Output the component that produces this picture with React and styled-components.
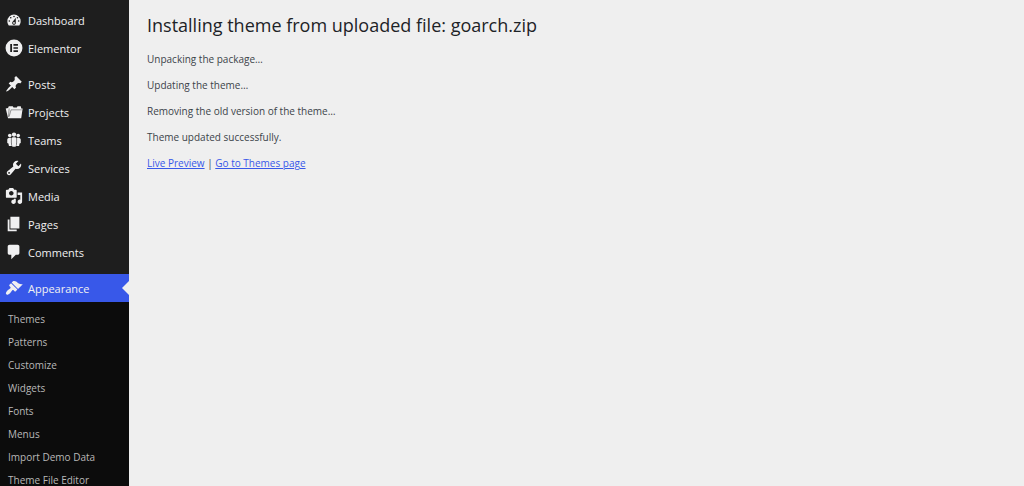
import React from 'react';
import styled, { createGlobalStyle } from 'styled-components';

const GlobalStyle = createGlobalStyle`
  * {
    box-sizing: border-box;
  }

  body {
    margin: 0;
    background-color: #efefef;
    color: #3c434a;
    font-family: 'Segoe UI', 'Open Sans', 'Noto Sans', sans-serif;
    font-size: 10px;
  }
`;

const Layout = styled.div`
  display: flex;
  height: 100vh;
  overflow: hidden;
`;

const Sidebar = styled.nav`
  flex: none;
  width: 129px;
  padding-top: 6px;
  background-color: #1e1e1e;
`;

const MenuList = styled.ul`
  margin: 0 0 8px;
  padding: 0;
  list-style: none;
`;

const MenuLink = styled.a`
  position: relative;
  display: flex;
  align-items: center;
  gap: 5px;
  height: 28px;
  padding-left: 5px;
  background-color: ${({ $active }) => ($active ? '#3858e9' : 'transparent')};
  color: #f0f0f1;
  font-size: 11px;
  font-weight: 500;
  text-decoration: none;
  white-space: nowrap;

  &::after {
    content: '';
    display: ${({ $active }) => ($active ? 'block' : 'none')};
    position: absolute;
    top: 7px;
    right: 0;
    border: solid transparent;
    border-width: 7px 7px 7px 0;
    border-right-color: #efefef;
  }
`;

const Icon = styled.svg`
  flex: none;
  width: 18px;
  height: 18px;
  fill: currentColor;
`;

const SubMenu = styled.ul`
  height: 100vh;
  margin: 0;
  padding: 6px 0;
  background-color: #0c0c0c;
  list-style: none;
`;

const SubLink = styled.a`
  display: block;
  padding-left: 8px;
  color: #b8b8b8;
  font-size: 10px;
  line-height: 23px;
  text-decoration: none;
  white-space: nowrap;
`;

const Content = styled.main`
  flex: 1;
  min-width: 0;
  padding: 12px 18px;
`;

const Title = styled.h1`
  margin: 0 0 8px;
  color: #1d2327;
  font-size: 18px;
  font-weight: 400;
  line-height: 26px;
`;

const Message = styled.p`
  margin: 0;
  line-height: 26px;
`;

const ActionLink = styled.a`
  color: #3858e9;
  text-decoration: underline;
`;

const icons = {
  dashboard: (
    <path
      fillRule="evenodd"
      d="M4.2 16h11.6c1-1.3 1.6-2.9 1.6-4.7a7.4 7.4 0 1 0-14.8 0c0 1.8.6 3.4 1.6 4.7zM10 5.2a.9.9 0 1 1 0 1.8.9.9 0 0 1 0-1.8zM6.4 6.6a.9.9 0 1 1 0 1.8.9.9 0 0 1 0-1.8zM13.8 6.6a.9.9 0 1 1 0 1.8.9.9 0 0 1 0-1.8zM8.7 11.7L12 7.6v5.6c0 1.1-.9 2-2 2s-2-.9-2-2c0-.6.3-1.1.7-1.5zM4.8 10.2a.9.9 0 1 1 0 1.8.9.9 0 0 1 0-1.8zM15.2 10.2a.9.9 0 1 1 0 1.8.9.9 0 0 1 0-1.8zM11 13.2a1 1 0 1 0-2 0 1 1 0 0 0 2 0z"
    />
  ),
  elementor: (
    <path
      fillRule="evenodd"
      d="M10 .6a9.4 9.4 0 1 0 0 18.8A9.4 9.4 0 0 0 10 .6zM5.8 5.6h2v8.8h-2zM9.4 5.6h5v1.8h-5zM9.4 9.1h5v1.8h-5zM9.4 12.6h5v1.8h-5z"
    />
  ),
  posts: (
    <path d="M10.44 3.02l1.82-1.82 6.36 6.35-1.83 1.82c-1.05-.68-2.48-.57-3.41.36l-.75.75c-.92.93-1.04 2.35-.35 3.41l-1.83 1.82-2.41-2.41-2.8 2.79c-.42.42-3.38 2.71-3.8 2.29s1.86-3.39 2.28-3.81l2.79-2.79L4.1 9.36l1.83-1.82c1.05.69 2.48.57 3.4-.36l.75-.75c.93-.92 1.05-2.35.36-3.41z" />
  ),
  projects: (
    <>
      <path d="M.8 6l2.6-.5.8-2h4.4l.9 1.4h3.6l.8-1.3h3.6l.6 2.4h1.5L18 17H3.4z" />
      <path
        d="M3.9 15.4L4.6 6M4.6 15.2l2.1-7.6h12"
        fill="none"
        stroke="#1e1e1e"
        strokeWidth="0.8"
        opacity="0.6"
      />
    </>
  ),
  teams: (
    <>
      <circle cx="10" cy="4" r="2.4" />
      <circle cx="5.3" cy="5" r="2" />
      <circle cx="14.7" cy="5" r="2" />
      <path d="M7.2 8.4C7.2 7.5 8.4 7 10 7s2.8.5 2.8 1.4v5L11.8 17.5H8.2L7.2 13.4z" />
      <path d="M6.6 7.6C4.4 7 2.5 8 2.5 9.6v3.6l1.3.8.6 2.6h3.2L6.6 13.4z" />
      <path d="M13.4 7.6c2.2-.6 4.1.4 4.1 2v3.6l-1.3.8-.6 2.6h-3.2l1-3.2z" />
    </>
  ),
  services: (
    <path d="M16.68 9.77c-1.34 1.34-3.3 1.67-4.95.99l-5.41 6.52c-.99.99-2.59.99-3.58 0s-.99-2.59 0-3.57l6.52-5.42c-.68-1.65-.35-3.61.99-4.95 1.28-1.28 3.12-1.62 4.72-1.06l-2.89 2.89 2.82 2.82 2.86-2.87c.53 1.58.18 3.39-1.08 4.65zM3.81 16.21c.4.39 1.04.39 1.43 0 .4-.4.4-1.04 0-1.43-.39-.4-1.03-.4-1.43 0-.39.39-.39 1.03 0 1.43z" />
  ),
  media: (
    <path
      fillRule="evenodd"
      d="M13 11V4c0-.55-.45-1-1-1h-1.67L9 1H5L3.67 3H2c-.55 0-1 .45-1 1v7c0 .55.45 1 1 1h10c.55 0 1-.45 1-1zM7 4.5c1.38 0 2.5 1.12 2.5 2.5S8.38 9.5 7 9.5 4.5 8.38 4.5 7 5.62 4.5 7 4.5zM14 6h5v10.5c0 1.38-1.12 2.5-2.5 2.5S14 17.88 14 16.5s1.12-2.5 2.5-2.5c.17 0 .34.02.5.05V9h-3V6zm-4 8.05V13h2v3.5c0 1.38-1.12 2.5-2.5 2.5S7 17.88 7 16.5 8.12 14 9.5 14c.17 0 .34.02.5.05z"
    />
  ),
  pages: <path d="M6 15V2h10v13H6zm-1 1h8v2H3V5h2v11z" />,
  comments: (
    <path d="M5 2h9c1.1 0 2 .9 2 2v7c0 1.1-.9 2-2 2h-2l-5 5v-5H5c-1.1 0-2-.9-2-2V4c0-1.1.9-2 2-2z" />
  ),
  appearance: (
    <path d="M14.48 11.06L7.41 3.99l1.5-1.5c.5-.56 2.3-.47 3.51.32 1.21.8 1.43 1.28 2.91 2.1 1.18.64 2.45 1.26 4.45.85zm-.71.71L6.7 4.7 4.93 6.47c-.39.39-.39 1.02 0 1.41l1.06 1.06c.39.39.39 1.03 0 1.42-.6.6-1.43 1.11-2.21 1.69-.35.26-.7.53-1.01.84C1.43 14.23.4 16.08 1.4 17.07c.99 1 2.84-.03 4.18-1.36.31-.31.58-.66.85-1.02.57-.78 1.08-1.61 1.69-2.21.39-.39 1.02-.39 1.41 0l1.06 1.06c.39.39 1.02.39 1.41 0z" />
  ),
};

const menuGroups = [
  [
    { icon: 'dashboard', label: 'Dashboard' },
    { icon: 'elementor', label: 'Elementor' },
  ],
  [
    { icon: 'posts', label: 'Posts' },
    { icon: 'projects', label: 'Projects' },
    { icon: 'teams', label: 'Teams' },
    { icon: 'services', label: 'Services' },
    { icon: 'media', label: 'Media' },
    { icon: 'pages', label: 'Pages' },
    { icon: 'comments', label: 'Comments' },
  ],
  [
    {
      icon: 'appearance',
      label: 'Appearance',
      children: [
        'Themes',
        'Patterns',
        'Customize',
        'Widgets',
        'Fonts',
        'Menus',
        'Import Demo Data',
        'Theme File Editor',
      ],
    },
  ],
];

const messages = [
  'Unpacking the package…',
  'Updating the theme…',
  'Removing the old version of the theme…',
  'Theme updated successfully.',
];

const MenuItem = ({ icon, label, children }) => {
  return (
    <li>
      <MenuLink href="#" $active={Boolean(children)}>
        <Icon viewBox="0 0 20 20" aria-hidden="true">
          {icons[icon]}
        </Icon>
        {label}
      </MenuLink>
      {children && (
        <SubMenu>
          {children.map((name) => (
            <li key={name}>
              <SubLink href="#">{name}</SubLink>
            </li>
          ))}
        </SubMenu>
      )}
    </li>
  );
};

const App = () => {
  return (
    <>
      <GlobalStyle />
      <Layout>
        <Sidebar>
          {menuGroups.map((group) => (
            <MenuList key={group[0].label}>
              {group.map((item) => (
                <MenuItem key={item.label} {...item} />
              ))}
            </MenuList>
          ))}
        </Sidebar>
        <Content>
          <Title>Installing theme from uploaded file: goarch.zip</Title>
          {messages.map((message) => (
            <Message key={message}>{message}</Message>
          ))}
          <Message>
            <ActionLink href="#">Live Preview</ActionLink> |{' '}
            <ActionLink href="#">Go to Themes page</ActionLink>
          </Message>
        </Content>
      </Layout>
    </>
  );
};

export default App;
